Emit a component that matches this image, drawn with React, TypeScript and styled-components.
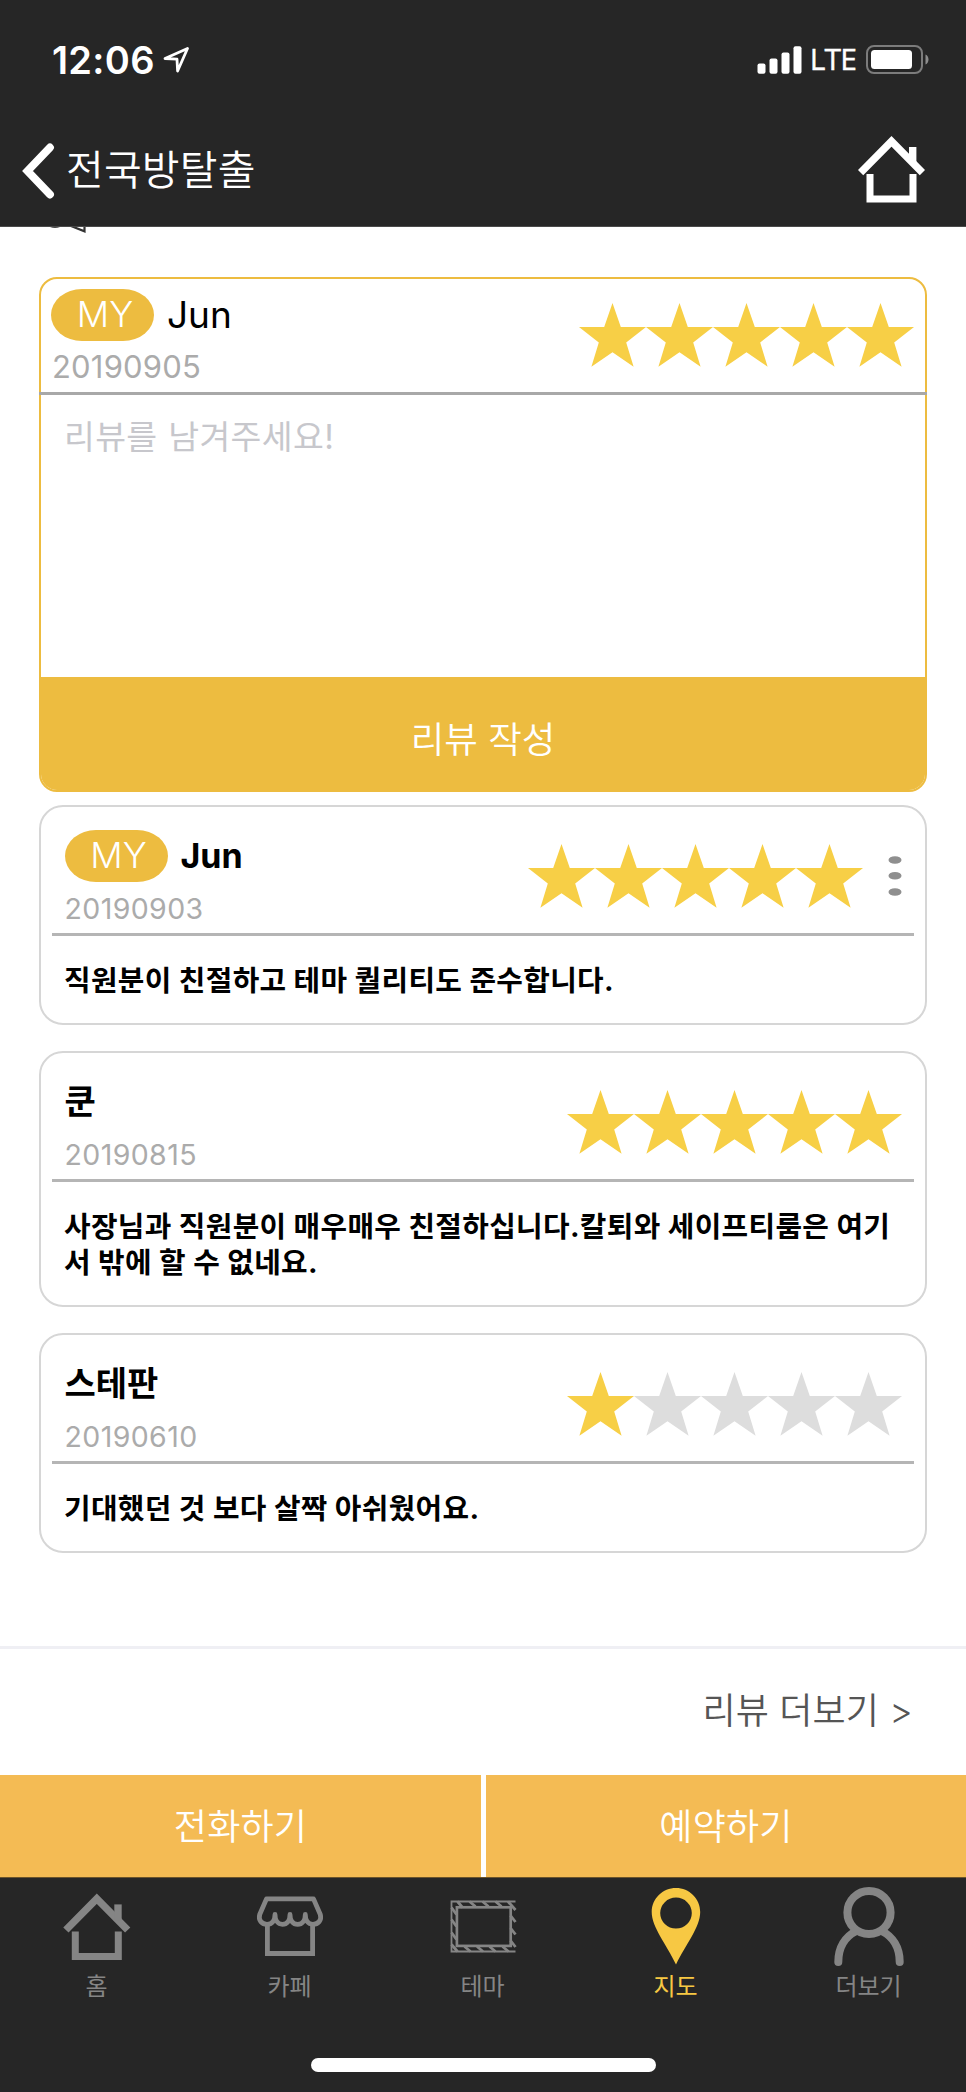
import React from 'react';
import styled, { createGlobalStyle } from 'styled-components';

const DARK = '#262626';
const GOLD = '#edbc40';
const STAR_ON = '#f7cf46';
const STAR_OFF = '#dddddd';

const GlobalStyle = createGlobalStyle`
  *, *::before, *::after { box-sizing: border-box; }
  body { margin: 0; background: #fff; }
  button { border: 0; padding: 0; margin: 0; background: none; font: inherit; color: inherit; }
`;

const Screen = styled.div`
  width: 966px;
  height: 2092px;
  display: flex;
  flex-direction: column;
  background: #fff;
  color: #000;
  overflow: hidden;
  font-family: Inter, 'Noto Sans CJK KR', sans-serif;
  white-space: nowrap;
`;

const TopBar = styled.header`
  flex: none;
  height: 227px;
  background: ${DARK};
  border-bottom: 1px solid #4a4a4a;
  color: #fff;
`;

const StatusBar = styled.div`
  height: 119px;
  padding: 0 37px 0 52px;
  display: flex;
  align-items: center;
  justify-content: space-between;
`;

const StatusGroup = styled.div`
  display: flex;
  align-items: center;
`;

const Clock = styled.span`
  font-size: 38px;
  font-weight: 600;
  line-height: 46px;
  letter-spacing: 0.3px;
  margin-right: 8px;
`;

const Network = styled.span`
  font-family: 'Open Sans', Inter, sans-serif;
  font-size: 30px;
  font-weight: 500;
  line-height: 40px;
  margin: 0 10px 1px 8px;
  letter-spacing: -0.9px;
  -webkit-text-stroke: 0.4px #fff;
`;

const NavBar = styled.div`
  height: 103px;
  padding: 0 41px 0 22px;
  display: flex;
  align-items: center;
  justify-content: space-between;
`;

const BackButton = styled.button`
  display: flex;
  align-items: center;
  gap: 11px;
`;

const NavTitle = styled.span`
  font-size: 41px;
  font-weight: 350;
  line-height: 56px;
  letter-spacing: 0.2px;
  margin-bottom: 2px;
`;

const HomeLink = styled.a`
  display: flex;
  margin-bottom: 2px;
  color: #fff;
`;

const ScrollArea = styled.main`
  flex: 1;
  padding: 0 39px;
`;

const ClippedRow = styled.div`
  height: 50px;
  padding-left: 11px;
  display: flex;
  align-items: flex-start;
`;

const WriteCard = styled.section`
  height: 515px;
  border: 2px solid ${GOLD};
  border-radius: 18px;
  display: flex;
  flex-direction: column;
`;

const WriteHead = styled.div`
  height: 116px;
  margin: 0 -2px;
  padding: 10px 13px 0 12px;
  display: flex;
  justify-content: space-between;
  border-bottom: 3px solid #a8a8a8;
`;

const Placeholder = styled.div`
  flex: 1;
  padding: 19px 23px;
  font-size: 33.5px;
  font-weight: 400;
  line-height: 46px;
  letter-spacing: 0.35px;
  word-spacing: 1px;
  color: #c7c7cc;
`;

const SubmitButton = styled.button`
  height: 113px;
  border-radius: 0 0 16px 16px;
  background: ${GOLD};
  color: #fff;
  font-size: 36.5px;
  font-weight: 350;
  line-height: 50px;
  padding-top: 13px;
  text-align: center;
`;

const Author = styled.div`
  display: flex;
  flex-direction: column;
`;

const AuthorLine = styled.div`
  height: 52px;
  display: flex;
  align-items: center;
`;

const MyBadge = styled.span`
  width: 103px;
  height: 52px;
  margin-right: 13px;
  border-radius: 31px / 26px;
  background: ${GOLD};
  color: #fff;
  font-size: 36px;
  font-weight: 300;
  line-height: 51px;
  padding-left: 5px;
  text-align: center;
`;

const Name = styled.span<{ $bold?: boolean }>`
  font-size: ${(p) => (p.$bold ? 34 : 37)}px;
  font-weight: ${(p) => (p.$bold ? 700 : 400)};
  line-height: 52px;
`;

const DateText = styled.span<{ $small?: boolean }>`
  margin: ${(p) => (p.$small ? '8px 0 0 0' : '7px 0 0 1px')};
  font-size: ${(p) => (p.$small ? 28.5 : 31)}px;
  font-weight: 400;
  line-height: 38px;
  letter-spacing: ${(p) => (p.$small ? 0.4 : 0.2)}px;
  color: #ababab;
`;

const StarRow = styled.div`
  display: flex;
  height: 64px;
`;

const ReviewCard = styled.article<{ $gap: number }>`
  margin-top: ${(p) => p.$gap}px;
  border: 2px solid #d6d6d6;
  border-radius: 24px;
  padding: 0 11px 24px;
`;

const ReviewHead = styled.div`
  height: 129px;
  padding: 23px 12.5px 0 12.5px;
  display: flex;
  justify-content: space-between;
  border-bottom: 3px solid #b5b5b5;
`;

const HeadRight = styled.div`
  display: flex;
  margin-top: 14px;
  gap: 25px;
`;

const MoreButton = styled.button`
  display: flex;
  height: 40px;
  margin: 11px 0 0 0;
`;

const ReviewText = styled.p`
  margin: 0;
  padding: 27px 13px 0 12px;
  font-size: 28.9px;
  font-weight: 700;
  line-height: 36px;
  letter-spacing: 0.33px;
`;

const MoreRow = styled.div`
  flex: none;
  height: 129px;
  border-top: 3px solid #efeff4;
  padding: 0 53px 2px 0;
  display: flex;
  align-items: center;
  justify-content: flex-end;
  color: #555;
  font-size: 36px;
  font-weight: 350;
  line-height: 50px;
  letter-spacing: 0.15px;
`;

const ActionRow = styled.div`
  flex: none;
  height: 102px;
  display: grid;
  grid-template-columns: 481px 480px;
  gap: 5px;
`;

const ActionButton = styled.button`
  padding: 2px 0 0 0;
  background: #f4bb54;
  color: #fff;
  font-size: 36px;
  font-weight: 350;
  line-height: 50px;
  letter-spacing: 0.2px;
  text-align: center;
`;

const BottomBar = styled.footer`
  flex: none;
  height: 215px;
  background: ${DARK};
  border-top: 1px solid #6b542b;
  display: flex;
  flex-direction: column;
  align-items: center;
`;

const Tabs = styled.nav`
  width: 966px;
  height: 180px;
  padding-right: 1px;
  display: grid;
  grid-template-columns: repeat(5, 1fr);
`;

const Tab = styled.div<{ $active?: boolean }>`
  display: flex;
  flex-direction: column;
  align-items: center;
  color: ${(p) => (p.$active ? '#f7c843' : '#858585')};
  font-size: 24px;
  line-height: 34px;

  svg { display: block; }
`;

const HomeIndicator = styled.div`
  width: 345px;
  height: 14px;
  border-radius: 7px;
  background: #fff;
`;

const HouseShape = () => (
  <g fill="none" stroke="currentColor" strokeWidth="7.4">
    <path d="M2.6 36.6 L33.5 5.3 L64.4 36.6" />
    <path d="M12 38 V63 H55 V38" strokeWidth="7" />
    <path d="M54.7 11 V27" strokeWidth="7.4" />
  </g>
);

const Star = ({ on }: { on: boolean }) => (
  <svg width="67" height="64" viewBox="0 0 67 64">
    <path
      d="M33.5 0 L41.8 24 H67 L47.2 39.5 L54.6 63.7 L33.5 49.2 L12.4 63.7 L19.8 39.5 L0 24 H25.2 Z"
      fill={on ? STAR_ON : STAR_OFF}
    />
  </svg>
);

const Stars = ({ score }: { score: number }) => (
  <StarRow>
    {[0, 1, 2, 3, 4].map((i) => (
      <Star key={i} on={i < score} />
    ))}
  </StarRow>
);

const TabHome = () => (
  <svg width="80" height="92" viewBox="0 0 80 92">
    <g transform="translate(6.3 15.4)"><HouseShape /></g>
  </svg>
);

const TabStore = () => (
  <svg width="80" height="92" viewBox="249 1878.5 80 92" fill="none" stroke="currentColor" strokeWidth="4.8">
    <path d="M265.5 1899.4 H312.5 L319.3 1915 C321 1921 317 1924.8 312 1924.8 C307 1924.8 304.3 1921 304.3 1915 C304.3 1921 301 1924.8 296.7 1924.8 C292 1924.8 289 1921 289 1915 C289 1921 286 1924.8 281.4 1924.8 C277 1924.8 274 1921 274 1915 C274 1921 271 1924.8 266 1924.8 C261 1924.8 257 1921 258.7 1915 Z" strokeLinejoin="round" />
    <path d="M266.4 1925 V1954 H311.6 V1925" />
  </svg>
);

const TabFrame = () => (
  <svg width="80" height="92" viewBox="442.5 1878.5 80 92" fill="none" stroke="currentColor">
    <path d="M515 1902 H451 V1952 H515" strokeWidth="1.8" />
    <rect x="456.4" y="1907.8" width="53.8" height="38.6" strokeWidth="2.7" />
    <path
      d="M457 1902 l5 6 M469 1902 l6 5 M482 1902 l6 5 M495 1902 l6 5 M507.5 1902 l7.5 8.5 M451 1908 l5 7 M451 1920 l5 7 M451 1933 l5 7 M451 1945 l6 7 M510 1916 l5 6.5 M510 1928.5 l5 6.5 M510 1941 l5 6.5 M464 1947 l6 5 M476.5 1947 l6 5 M489 1947 l6 5 M502 1947 l6 5"
      strokeWidth="2.8"
    />
  </svg>
);

const TabPin = () => (
  <svg width="80" height="92" viewBox="635.8 1879 80 92">
    <path
      d="M675.8 1889 C689 1889 700 1899.5 700 1913 C700 1928 686 1945 675.8 1965.5 C666 1945 651.5 1928 651.5 1913 C651.5 1899.5 662.5 1889 675.8 1889 Z M675.8 1898.6 A15.8 15.5 0 1 0 675.8 1929.6 A15.8 15.5 0 1 0 675.8 1898.6 Z"
      fill="currentColor"
      fillRule="evenodd"
    />
  </svg>
);

const TabPerson = () => (
  <svg width="80" height="92" viewBox="828.7 1878.5 80 92" fill="none" stroke="currentColor" strokeWidth="8">
    <circle cx="868.7" cy="1913" r="21.6" />
    <path d="M838 1962.5 C838 1948 845 1937 856 1931.5 M899.4 1962.5 C899.4 1948 892.4 1937 881.4 1931.5" strokeLinecap="round" />
  </svg>
);

const tabs = [
  { label: '홈', Icon: TabHome },
  { label: '카페', Icon: TabStore },
  { label: '테마', Icon: TabFrame },
  { label: '지도', Icon: TabPin, active: true },
  { label: '더보기', Icon: TabPerson },
];

const reviews = [
  { name: 'Jun', mine: true, date: '20190903', score: 5, gap: 13, lines: ['직원분이 친절하고 테마 퀄리티도 준수합니다.'] },
  {
    name: '쿤',
    date: '20190815',
    score: 5,
    gap: 26,
    lines: ['사장님과 직원분이 매우매우 친절하십니다.칼퇴와 세이프티룸은 여기', '서 밖에 할 수 없네요.'],
  },
  { name: '스테판', date: '20190610', score: 1, gap: 26, lines: ['기대했던 것 보다 살짝 아쉬웠어요.'] },
];

export default function App() {
  return (
    <>
      <GlobalStyle />
      <Screen>
        <TopBar>
          <StatusBar>
            <StatusGroup>
              <Clock>12:06</Clock>
              <svg width="27" height="28" viewBox="0 0 27 28">
                <path d="M2 12.5 L24.5 2.5 L14.6 25 L14 13.2 Z" fill="none" stroke="#fff" strokeWidth="2.8" strokeLinejoin="round" />
              </svg>
            </StatusGroup>
            <StatusGroup>
              <svg width="45" height="28" viewBox="0 0 45 28" fill="#fff">
                <rect x="0.5" y="17.5" width="8" height="10.3" rx="2" />
                <rect x="12.5" y="12.5" width="8" height="15.3" rx="2" />
                <rect x="24.5" y="6.5" width="8" height="21.3" rx="2" />
                <rect x="36.5" y="0.3" width="8" height="27.5" rx="2" />
              </svg>
              <Network>LTE</Network>
              <svg width="63" height="29" viewBox="0 0 63 29">
                <rect x="1" y="1" width="55" height="27" rx="7" fill="none" stroke="#7c7c7c" strokeWidth="2" />
                <rect x="5" y="5" width="41" height="19" rx="3.5" fill="#fff" />
                <path d="M59.5 9.5 C63.5 11 63.5 18 59.5 19.5 Z" fill="#8d8d8d" />
              </svg>
            </StatusGroup>
          </StatusBar>
          <NavBar>
            <BackButton>
              <svg width="33" height="56" viewBox="0 0 33 56">
                <path d="M28 4.5 L5.5 28 L28 51.5" fill="none" stroke="#fff" strokeWidth="7.8" strokeLinecap="round" strokeLinejoin="miter" />
              </svg>
              <NavTitle>전국방탈출</NavTitle>
            </BackButton>
            <HomeLink aria-label="home">
              <svg width="67" height="67" viewBox="0 0 67 67">
                <HouseShape />
              </svg>
            </HomeLink>
          </NavBar>
        </TopBar>

        <ScrollArea>
          <ClippedRow>
            <svg width="40" height="7" viewBox="0 0 40 7">
              <path d="M0 0 Q5 1.8 10 0 Z" fill="#444" />
              <path d="M21 -1 L34.5 4.3 V-1" fill="none" stroke="#333" strokeWidth="2.2" />
            </svg>
          </ClippedRow>

          <WriteCard>
            <WriteHead>
              <Author>
                <AuthorLine>
                  <MyBadge>MY</MyBadge>
                  <Name>Jun</Name>
                </AuthorLine>
                <DateText>20190905</DateText>
              </Author>
              <HeadRight>
                <Stars score={5} />
              </HeadRight>
            </WriteHead>
            <Placeholder>리뷰를 남겨주세요!</Placeholder>
            <SubmitButton>리뷰 작성</SubmitButton>
          </WriteCard>

          {reviews.map((r) => (
            <ReviewCard key={r.date} $gap={r.gap}>
              <ReviewHead>
                <Author>
                  <AuthorLine>
                    {r.mine && <MyBadge>MY</MyBadge>}
                    <Name $bold>{r.name}</Name>
                  </AuthorLine>
                  <DateText $small>{r.date}</DateText>
                </Author>
                <HeadRight>
                  <Stars score={r.score} />
                  {r.mine && (
                    <MoreButton aria-label="more">
                      <svg width="14" height="44" viewBox="0 0 14 44" fill="#8f8f8f">
                        <ellipse cx="7" cy="5" rx="6.5" ry="3.8" />
                        <ellipse cx="7" cy="20.7" rx="6.5" ry="3.8" />
                        <ellipse cx="7" cy="37" rx="6.5" ry="3.8" />
                      </svg>
                    </MoreButton>
                  )}
                </HeadRight>
              </ReviewHead>
              <ReviewText>
                {r.lines.map((line, i) => (
                  <React.Fragment key={i}>
                    {i > 0 && <br />}
                    {line}
                  </React.Fragment>
                ))}
              </ReviewText>
            </ReviewCard>
          ))}
        </ScrollArea>

        <MoreRow>리뷰 더보기 &gt;</MoreRow>
        <ActionRow>
          <ActionButton>전화하기</ActionButton>
          <ActionButton>예약하기</ActionButton>
        </ActionRow>
        <BottomBar>
          <Tabs>
            {tabs.map(({ label, Icon, active }) => (
              <Tab key={label} $active={active}>
                <Icon />
                {label}
              </Tab>
            ))}
          </Tabs>
          <HomeIndicator />
        </BottomBar>
      </Screen>
    </>
  );
}
